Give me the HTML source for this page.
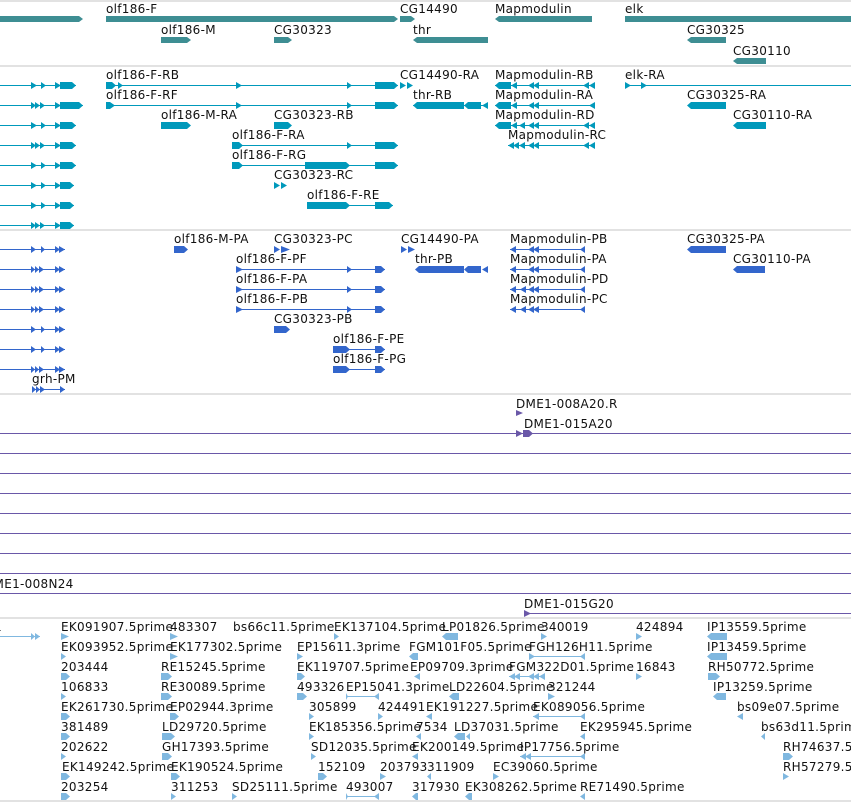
<!DOCTYPE html>
<html><head><meta charset="utf-8"><style>
html,body{margin:0;padding:0;background:#fff;width:851px;height:802px;overflow:hidden}
svg{display:block}
text{font-family:"DejaVu Sans","Liberation Sans",sans-serif;font-size:12px;fill:#111;letter-spacing:0.3px}
.g{fill:#3e8e93}.t{fill:#0099bb}.p{fill:#3366cc}.u{fill:#6a58a8}.e{fill:#80b8e0}
.tl{stroke:#0099bb}.pl{stroke:#3366cc}.ul{stroke:#6a58a8}.el{stroke:#80b8e0}
line{stroke-width:1}
</style></head><body>
<svg width="851" height="802" viewBox="0 0 851 802" xmlns="http://www.w3.org/2000/svg">
<g stroke="#c4c4c4" stroke-width="2">
<line x1="0" y1="1" x2="851" y2="1"/><line x1="0" y1="66" x2="851" y2="66"/><line x1="0" y1="230" x2="851" y2="230"/><line x1="0" y1="394" x2="851" y2="394"/><line x1="0" y1="618" x2="851" y2="618"/><line x1="0" y1="801" x2="851" y2="801"/>
</g>
<!-- GENES -->
<g class="g">
<path d="M0 16H79L83 19L79 22H0Z"/>
<path d="M106 16H394L398 19L394 22H106Z"/>
<path d="M400 16H411L415 19L411 22H400Z"/>
<path d="M592 16H499L495 19L499 22H592Z"/>
<path d="M625 16H851V22H625Z"/>
<path d="M161 37H187L191 40L187 43H161Z"/>
<path d="M274 37H288L292 40L288 43H274Z"/>
<path d="M488 37H417L413 40L417 43H488Z"/>
<path d="M726 37H691L687 40L691 43H726Z"/>
<path d="M766 58H737L733 61L737 64H766Z"/>
</g>
<text x="106" y="13">olf186-F</text><text x="400" y="13">CG14490</text><text x="495" y="13">Mapmodulin</text><text x="625" y="13">elk</text>
<text x="161" y="34">olf186-M</text><text x="274" y="34">CG30323</text><text x="413" y="34">thr</text><text x="687" y="34">CG30325</text>
<text x="733" y="55">CG30110</text>
<!-- TRANSCRIPTS -->
<g class="tl">
<line x1="0" y1="85.5" x2="76" y2="85.5"/><line x1="0" y1="105.5" x2="83" y2="105.5"/><line x1="0" y1="125.5" x2="76" y2="125.5"/><line x1="0" y1="145.5" x2="76" y2="145.5"/><line x1="0" y1="165.5" x2="76" y2="165.5"/><line x1="0" y1="185.5" x2="74" y2="185.5"/><line x1="0" y1="205.5" x2="74" y2="205.5"/><line x1="0" y1="225.5" x2="74" y2="225.5"/>
<line x1="106" y1="85.5" x2="398" y2="85.5"/><line x1="106" y1="105.5" x2="398" y2="105.5"/><line x1="232" y1="145.5" x2="398" y2="145.5"/><line x1="232" y1="165.5" x2="398" y2="165.5"/><line x1="307" y1="205.5" x2="393" y2="205.5"/>
<line x1="495" y1="85.5" x2="590" y2="85.5"/><line x1="495" y1="105.5" x2="590" y2="105.5"/><line x1="495" y1="125.5" x2="590" y2="125.5"/><line x1="508" y1="145.5" x2="590" y2="145.5"/>
<line x1="625" y1="85.5" x2="851" y2="85.5"/><line x1="413" y1="105.5" x2="488" y2="105.5"/>
</g>
<g class="t">
<path d="M31 82L37 85.5L31 89ZM41 82L46 85.5L41 89ZM55 82L61 85.5L55 89ZM60 82H72L76 85.5L72 89H60Z"/>
<path d="M31 102L36 105.5L31 109ZM35 102L40 105.5L35 109ZM40 102L45 105.5L40 109ZM55 102L61 105.5L55 109ZM60 102H79L83 105.5L79 109H60Z"/>
<path d="M31 122L37 125.5L31 129ZM41 122L46 125.5L41 129ZM55 122L61 125.5L55 129ZM60 122H72L76 125.5L72 129H60Z"/>
<path d="M31 142L36 145.5L31 149ZM35 142L40 145.5L35 149ZM40 142L45 145.5L40 149ZM55 142L61 145.5L55 149ZM60 142H72L76 145.5L72 149H60Z"/>
<path d="M31 162L37 165.5L31 169ZM41 162L46 165.5L41 169ZM55 162L61 165.5L55 169ZM60 162H72L76 165.5L72 169H60Z"/>
<path d="M31 182L37 185.5L31 189ZM41 182L46 185.5L41 189ZM55 182L61 185.5L55 189ZM60 182H70L74 185.5L70 189H60Z"/>
<path d="M31 202L37 205.5L31 209ZM41 202L46 205.5L41 209ZM55 202L61 205.5L55 209ZM60 202H70L74 205.5L70 209H60Z"/>
<path d="M31 222L36 225.5L31 229ZM35 222L40 225.5L35 229ZM40 222L45 225.5L40 229ZM55 222L61 225.5L55 229ZM60 222H70L74 225.5L70 229H60Z"/>
<path d="M106 82H112L116 85.5L112 89H106ZM118 82L123 85.5L118 89ZM236 82L242 85.5L236 89ZM347 82L352 85.5L347 89ZM375 82H394L398 85.5L394 89H375Z"/>
<path d="M106 102H110L115 105.5L110 109H106ZM236 102L242 105.5L236 109ZM347 102L352 105.5L347 109ZM375 102H394L398 105.5L394 109H375Z"/>
<path d="M161 122H187L191 125.5L187 129H161ZM274 122H288L292 125.5L288 129H274Z"/>
<path d="M232 142H239L243 145.5L239 149H232ZM347 142L352 145.5L347 149ZM375 142H394L398 145.5L394 149H375Z"/>
<path d="M232 162H239L243 165.5L239 169H232ZM305 162H346L350 165.5L346 169H305ZM375 162H394L398 165.5L394 169H375Z"/>
<path d="M274 182L280 185.5L274 189ZM281 182L287 185.5L281 189Z"/>
<path d="M307 202H346L350 205.5L346 209H307ZM375 202H389L393 205.5L389 209H375Z"/>
<path d="M400 82L406 85.5L400 89ZM407 82L413 85.5L407 89Z"/>
<path d="M464 102H417L413 105.5L417 109H464ZM481 102H468L464 105.5L468 109H481ZM488 102L482 105.5L488 109Z"/>
<path d="M511 82H499L495 85.5L499 89H511ZM517 82L511 85.5L517 89ZM534 82L528 85.5L534 89ZM539 82L533 85.5L539 89ZM589 82L583 85.5L589 89ZM595 82L589 85.5L595 89Z"/>
<path d="M511 102H499L495 105.5L499 109H511ZM517 102L511 105.5L517 109ZM534 102L528 105.5L534 109ZM539 102L533 105.5L539 109ZM595 102L589 105.5L595 109Z"/>
<path d="M511 122H499L495 125.5L499 129H511ZM517 122L511 125.5L517 129ZM525 122L519 125.5L525 129ZM534 122L528 125.5L534 129ZM539 122L533 125.5L539 129ZM589 122L583 125.5L589 129ZM595 122L589 125.5L595 129Z"/>
<path d="M514 142L508 145.5L514 149ZM519 142L513 145.5L519 149ZM525 142L519 145.5L525 149ZM534 142L528 145.5L534 149ZM539 142L533 145.5L539 149ZM589 142L583 145.5L589 149ZM595 142L589 145.5L595 149Z"/>
<path d="M625 82L631 85.5L625 89ZM641 82L647 85.5L641 89Z"/>
<path d="M726 102H691L687 105.5L691 109H726ZM766 122H737L733 125.5L737 129H766Z"/>
</g>
<text x="106" y="79">olf186-F-RB</text><text x="400" y="79">CG14490-RA</text><text x="495" y="79">Mapmodulin-RB</text><text x="625" y="79">elk-RA</text>
<text x="106" y="99">olf186-F-RF</text><text x="413" y="99">thr-RB</text><text x="495" y="99">Mapmodulin-RA</text><text x="687" y="99">CG30325-RA</text>
<text x="161" y="119">olf186-M-RA</text><text x="274" y="119">CG30323-RB</text><text x="495" y="119">Mapmodulin-RD</text><text x="733" y="119">CG30110-RA</text>
<text x="232" y="139">olf186-F-RA</text><text x="508" y="139">Mapmodulin-RC</text>
<text x="232" y="159">olf186-F-RG</text>
<text x="274" y="179">CG30323-RC</text>
<text x="307" y="199">olf186-F-RE</text>
<!-- PROTEINS -->
<g class="pl">
<line x1="0" y1="249.5" x2="65" y2="249.5"/><line x1="0" y1="269.5" x2="65" y2="269.5"/><line x1="0" y1="289.5" x2="65" y2="289.5"/><line x1="0" y1="309.5" x2="65" y2="309.5"/><line x1="0" y1="329.5" x2="65" y2="329.5"/><line x1="0" y1="349.5" x2="65" y2="349.5"/><line x1="0" y1="369.5" x2="65" y2="369.5"/><line x1="32" y1="389.5" x2="65" y2="389.5"/>
<line x1="236" y1="269.5" x2="385" y2="269.5"/><line x1="236" y1="289.5" x2="385" y2="289.5"/><line x1="236" y1="309.5" x2="385" y2="309.5"/><line x1="333" y1="349.5" x2="385" y2="349.5"/><line x1="333" y1="369.5" x2="385" y2="369.5"/>
<line x1="510" y1="249.5" x2="585" y2="249.5"/><line x1="510" y1="269.5" x2="585" y2="269.5"/><line x1="510" y1="289.5" x2="585" y2="289.5"/><line x1="510" y1="309.5" x2="585" y2="309.5"/>
</g>
<g class="p">
<path d="M31 246L36 249.5L31 253ZM41 246L45 249.5L41 253ZM55 246L60 249.5L55 253ZM59 246L65 249.5L59 253Z"/>
<path d="M31 266L35 269.5L31 273ZM35 266L39 269.5L35 273ZM39 266L44 269.5L39 273ZM55 266L60 269.5L55 273ZM59 266L65 269.5L59 273Z"/>
<path d="M31 286L35 289.5L31 293ZM35 286L39 289.5L35 293ZM39 286L44 289.5L39 293ZM55 286L60 289.5L55 293ZM59 286L65 289.5L59 293Z"/>
<path d="M31 306L35 309.5L31 313ZM35 306L39 309.5L35 313ZM39 306L44 309.5L39 313ZM55 306L60 309.5L55 313ZM59 306L65 309.5L59 313Z"/>
<path d="M31 326L36 329.5L31 333ZM41 326L45 329.5L41 333ZM55 326L60 329.5L55 333ZM59 326L65 329.5L59 333Z"/>
<path d="M31 346L36 349.5L31 353ZM41 346L45 349.5L41 353ZM55 346L60 349.5L55 353ZM59 346L65 349.5L59 353Z"/>
<path d="M31 366L35 369.5L31 373ZM35 366L39 369.5L35 373ZM39 366L44 369.5L39 373ZM55 366L60 369.5L55 373ZM59 366L65 369.5L59 373Z"/>
<path d="M32 386L36 389.5L32 393ZM36 386L40 389.5L36 393ZM40 386L45 389.5L40 393ZM60 386L65 389.5L60 393Z"/>
<path d="M174 246H184L188 249.5L184 253H174ZM274 246L280 249.5L274 253ZM281 246L290 249.5L281 253ZM401 246L407 249.5L401 253ZM408 246L415 249.5L408 253Z"/>
<path d="M236 266L243 269.5L236 273ZM347 266L352 269.5L347 273ZM375 266H381L385 269.5L381 273H375Z"/>
<path d="M236 286L243 289.5L236 293ZM347 286L352 289.5L347 293ZM375 286H381L385 289.5L381 293H375Z"/>
<path d="M236 306L243 309.5L236 313ZM347 306L352 309.5L347 313ZM375 306H381L385 309.5L381 313H375Z"/>
<path d="M274 326H286L290 329.5L286 333H274Z"/>
<path d="M333 346H346L350 349.5L346 353H333ZM375 346H381L385 349.5L381 353H375Z"/>
<path d="M333 366H346L350 369.5L346 373H333ZM375 366H381L385 369.5L381 373H375Z"/>
<path d="M464 266H419L415 269.5L419 273H464ZM481 266H468L464 269.5L468 273H481ZM488 266L482 269.5L488 273Z"/>
<path d="M516 246L510 249.5L516 253ZM534 246L528 249.5L534 253ZM539 246L533 249.5L539 253ZM585 246L580 249.5L585 253Z"/>
<path d="M516 266L510 269.5L516 273ZM534 266L528 269.5L534 273ZM539 266L533 269.5L539 273ZM585 266L580 269.5L585 273Z"/>
<path d="M516 286L510 289.5L516 293ZM526 286L520 289.5L526 293ZM534 286L528 289.5L534 293ZM539 286L533 289.5L539 293ZM585 286L580 289.5L585 293Z"/>
<path d="M516 306L510 309.5L516 313ZM526 306L520 309.5L526 313ZM534 306L528 309.5L534 313ZM539 306L533 309.5L539 313ZM585 306L580 309.5L585 313Z"/>
<path d="M726 246H691L687 249.5L691 253H726ZM765 266H737L733 269.5L737 273H765Z"/>
</g>
<text x="174" y="243">olf186-M-PA</text><text x="274" y="243">CG30323-PC</text><text x="401" y="243">CG14490-PA</text><text x="510" y="243">Mapmodulin-PB</text><text x="687" y="243">CG30325-PA</text>
<text x="236" y="263">olf186-F-PF</text><text x="415" y="263">thr-PB</text><text x="510" y="263">Mapmodulin-PA</text><text x="733" y="263">CG30110-PA</text>
<text x="236" y="283">olf186-F-PA</text><text x="510" y="283">Mapmodulin-PD</text>
<text x="236" y="303">olf186-F-PB</text><text x="510" y="303">Mapmodulin-PC</text>
<text x="274" y="323">CG30323-PB</text>
<text x="333" y="343">olf186-F-PE</text>
<text x="333" y="363">olf186-F-PG</text>
<text x="32" y="383">grh-PM</text>
<!-- CLONES -->
<g class="ul">
<line x1="0" y1="433.5" x2="851" y2="433.5"/><line x1="0" y1="453.5" x2="851" y2="453.5"/><line x1="0" y1="473.5" x2="851" y2="473.5"/><line x1="0" y1="493.5" x2="851" y2="493.5"/><line x1="0" y1="513.5" x2="851" y2="513.5"/><line x1="0" y1="533.5" x2="851" y2="533.5"/><line x1="0" y1="553.5" x2="851" y2="553.5"/><line x1="0" y1="573.5" x2="851" y2="573.5"/><line x1="0" y1="593.5" x2="851" y2="593.5"/><line x1="524" y1="613.5" x2="851" y2="613.5"/>
</g>
<g class="u">
<path d="M516 410L523 413L516 416ZM516 430L523 433.5L516 437ZM523 430H529L533 433.5L529 437H523ZM524 610L531 613.5L524 617Z"/>
</g>
<text x="516" y="408">DME1-008A20.R</text><text x="524" y="428">DME1-015A20</text>
<text x="-16" y="588">DME1-008N24</text><text x="524" y="608">DME1-015G20</text>
<!-- ESTs -->
<g class="el">
<line x1="0" y1="636.5" x2="40" y2="636.5"/><line x1="529" y1="656.5" x2="585" y2="656.5"/><line x1="509" y1="676.5" x2="545" y2="676.5"/><line x1="346" y1="696.5" x2="379" y2="696.5"/><line x1="533" y1="716.5" x2="585" y2="716.5"/><line x1="520" y1="756.5" x2="585" y2="756.5"/><line x1="346" y1="796.5" x2="379" y2="796.5"/>
</g>
<g class="e">
<path d="M31 633L35 636.5L31 640ZM35 633L40 636.5L35 640Z"/>
<path d="M61 633L69 636.5L61 640ZM170 633L178 636.5L170 640ZM334 633L339 636.5L334 640ZM458 633H446L442 636.5L446 640H458ZM541 633L547 636.5L541 640ZM636 633L642 636.5L636 640ZM727 633H711L707 636.5L711 640H727Z"/>
<path d="M61 653L66 656.5L61 660ZM170 653L178 656.5L170 660ZM297 653L303 656.5L297 660ZM418 653H413L409 656.5L413 660H418ZM529 653L535 656.5L529 660ZM585 653L580 656.5L585 660ZM727 653H711L707 656.5L711 660H727Z"/>
<path d="M61 673H66L70 676.5L66 680H61ZM161 673H168L172 676.5L168 680H161ZM297 673H301L305 676.5L301 680H297ZM420 673L414 676.5L420 680ZM515 673L509 676.5L515 680ZM520 673L514 676.5L520 680ZM534 673L528 676.5L534 680ZM539 673L533 676.5L539 680ZM545 673L539 676.5L545 680ZM636 673L642 676.5L636 680ZM708 673H716L720 676.5L716 680H708Z"/>
<path d="M61 693L66 696.5L61 700ZM161 693H168L172 696.5L168 700H161ZM297 693H303L307 696.5L303 700H297ZM346 693L348 696.5L346 700ZM379 693L374 696.5L379 700ZM459 693H453L449 696.5L453 700H459ZM548 693L555 696.5L548 700ZM726 693H717L713 696.5L717 700H726Z"/>
<path d="M61 713H66L70 716.5L66 720H61ZM170 713H175L179 716.5L175 720H170ZM309 713L314 716.5L309 720ZM378 713L383 716.5L378 720ZM432 713L426 716.5L432 720ZM539 713L533 716.5L539 720ZM585 713L580 716.5L585 720ZM743 713L737 716.5L743 720Z"/>
<path d="M61 733H66L70 736.5L66 740H61ZM162 733H171L175 736.5L171 740H162ZM309 733L314 736.5L309 740ZM421 733L416 736.5L421 740ZM465 733H458L454 736.5L458 740H465ZM470 733L466 736.5L470 740ZM585 733L580 736.5L585 740ZM765 733L761 736.5L765 740Z"/>
<path d="M61 753L66 756.5L61 760ZM162 753H168L172 756.5L168 760H162ZM311 753L316 756.5L311 760ZM418 753L412 756.5L418 760ZM526 753L520 756.5L526 760ZM531 753L525 756.5L531 760ZM585 753L580 756.5L585 760ZM783 753H789L793 756.5L789 760H783Z"/>
<path d="M61 773H66L70 776.5L66 780H61ZM171 773H176L180 776.5L176 780H171ZM318 773H323L327 776.5L323 780H318ZM380 773L386 776.5L380 780ZM431 773L427 776.5L431 780ZM493 773L499 776.5L493 780ZM783 773L789 776.5L783 780Z"/>
<path d="M61 793H66L70 796.5L66 800H61ZM171 793L176 796.5L171 800ZM232 793L237 796.5L232 800ZM346 793L348 796.5L346 800ZM379 793L374 796.5L379 800ZM418 793H416L412 796.5L416 800H418ZM472 793H469L465 796.5L469 800H472ZM585 793L580 796.5L585 800Z"/>
</g>
<text x="-6" y="631">1</text><text x="61" y="631">EK091907.5prime</text><text x="170" y="631">483307</text><text x="233" y="631">bs66c11.5prime</text><text x="334" y="631">EK137104.5prime</text><text x="442" y="631">LP01826.5prime</text><text x="541" y="631">340019</text><text x="636" y="631">424894</text><text x="707" y="631">IP13559.5prime</text>
<text x="61" y="651">EK093952.5prime</text><text x="170" y="651">EK177302.5prime</text><text x="297" y="651">EP15611.3prime</text><text x="409" y="651">FGM101F05.5prime</text><text x="529" y="651">FGH126H11.5prime</text><text x="707" y="651">IP13459.5prime</text>
<text x="61" y="671">203444</text><text x="161" y="671">RE15245.5prime</text><text x="297" y="671">EK119707.5prime</text><text x="410" y="671">EP09709.3prime</text><text x="509" y="671">FGM322D01.5prime</text><text x="636" y="671">16843</text><text x="708" y="671">RH50772.5prime</text>
<text x="61" y="691">106833</text><text x="161" y="691">RE30089.5prime</text><text x="297" y="691">493326</text><text x="346" y="691">EP15041.3prime</text><text x="449" y="691">LD22604.5prime</text><text x="548" y="691">321244</text><text x="713" y="691">IP13259.5prime</text>
<text x="61" y="711">EK261730.5prime</text><text x="170" y="711">EP02944.3prime</text><text x="309" y="711">305899</text><text x="378" y="711">424491</text><text x="426" y="711">EK191227.5prime</text><text x="533" y="711">EK089056.5prime</text><text x="737" y="711">bs09e07.5prime</text>
<text x="61" y="731">381489</text><text x="162" y="731">LD29720.5prime</text><text x="309" y="731">EK185356.5prime</text><text x="416" y="731">7534</text><text x="454" y="731">LD37031.5prime</text><text x="580" y="731">EK295945.5prime</text><text x="761" y="731">bs63d11.5prime</text>
<text x="61" y="751">202622</text><text x="162" y="751">GH17393.5prime</text><text x="311" y="751">SD12035.5prime</text><text x="412" y="751">EK200149.5prime</text><text x="520" y="751">IP17756.5prime</text><text x="783" y="751">RH74637.5prime</text>
<text x="62" y="771">EK149242.5prime</text><text x="171" y="771">EK190524.5prime</text><text x="318" y="771">152109</text><text x="380" y="771">203793</text><text x="427" y="771">311909</text><text x="493" y="771">EC39060.5prime</text><text x="783" y="771">RH57279.5prime</text>
<text x="61" y="791">203254</text><text x="171" y="791">311253</text><text x="232" y="791">SD25111.5prime</text><text x="346" y="791">493007</text><text x="412" y="791">317930</text><text x="465" y="791">EK308262.5prime</text><text x="580" y="791">RE71490.5prime</text>
</svg>
</body></html>
